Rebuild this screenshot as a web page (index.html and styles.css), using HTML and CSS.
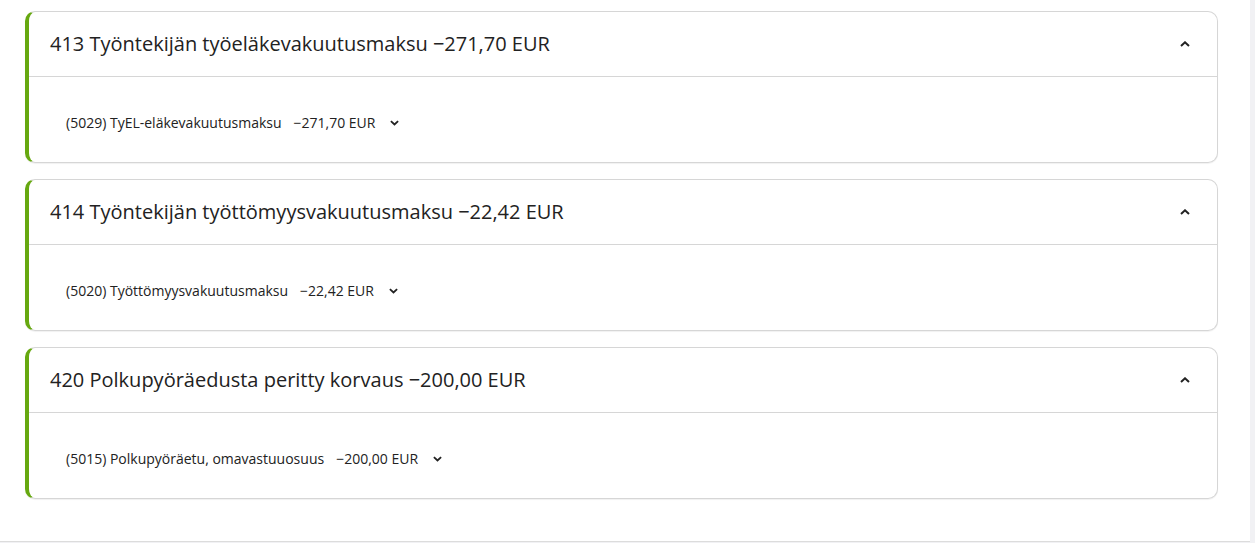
FILE: index.html
```html
<!DOCTYPE html>
<html lang="fi">
<head>
<meta charset="utf-8">
<link rel="stylesheet" href="styles.css">
</head>
<body>
<div class="page">
  <div class="list">
    <section class="card">
      <div class="card-head">
        <h2 class="card-title">413 Työntekijän työeläkevakuutusmaksu −271,70 EUR</h2>
        <svg class="chev" viewBox="0 0 10 6" width="10" height="6"><path d="M1 5 L5 1.3 L9 5" fill="none" stroke="#222" stroke-width="2"/></svg>
      </div>
      <div class="card-body">
        <span class="row-label">(5029) TyEL-eläkevakuutusmaksu</span>
        <span class="row-amount">−271,70 EUR</span>
        <svg class="chev small" viewBox="0 0 10 6" width="9" height="6"><path d="M1 1 L5 4.7 L9 1" fill="none" stroke="#222" stroke-width="2"/></svg>
      </div>
    </section>
    <section class="card">
      <div class="card-head">
        <h2 class="card-title">414 Työntekijän työttömyysvakuutusmaksu −22,42 EUR</h2>
        <svg class="chev" viewBox="0 0 10 6" width="10" height="6"><path d="M1 5 L5 1.3 L9 5" fill="none" stroke="#222" stroke-width="2"/></svg>
      </div>
      <div class="card-body">
        <span class="row-label">(5020) Työttömyysvakuutusmaksu</span>
        <span class="row-amount">−22,42 EUR</span>
        <svg class="chev small" viewBox="0 0 10 6" width="9" height="6"><path d="M1 1 L5 4.7 L9 1" fill="none" stroke="#222" stroke-width="2"/></svg>
      </div>
    </section>
    <section class="card">
      <div class="card-head">
        <h2 class="card-title">420 Polkupyöräedusta peritty korvaus −200,00 EUR</h2>
        <svg class="chev" viewBox="0 0 10 6" width="10" height="6"><path d="M1 5 L5 1.3 L9 5" fill="none" stroke="#222" stroke-width="2"/></svg>
      </div>
      <div class="card-body">
        <span class="row-label">(5015) Polkupyöräetu, omavastuuosuus</span>
        <span class="row-amount">−200,00 EUR</span>
        <svg class="chev small" viewBox="0 0 10 6" width="9" height="6"><path d="M1 1 L5 4.7 L9 1" fill="none" stroke="#222" stroke-width="2"/></svg>
      </div>
    </section>
  </div>
</div>
</body>
</html>
```

FILE: styles.css
```css
html, body {
  margin: 0;
  padding: 0;
  background: #f1f1f4;
  font-family: "Open Sans", "Noto Sans", sans-serif;
  color: #222;
}
.page {
  width: 1250px;
  height: 542px;
  background: #fff;
  border-bottom: 1px solid #dcdcdc;
  box-sizing: border-box;
  padding: 11px 0 0 25px;
}
.list {
  width: 1193px;
  display: flex;
  flex-direction: column;
  gap: 16px;
}
.card {
  border: 1px solid #d6d6d6;
  border-left: 4px solid #66a810;
  border-radius: 10px;
  background: #fff;
  box-shadow: 0 1px 1px rgba(0,0,0,0.06);
}
.card-head {
  height: 65px;
  display: flex;
  align-items: center;
  justify-content: space-between;
  padding: 0 27px 1px 21px;
  box-sizing: border-box;
  border-bottom: 1px solid #d6d6d6;
}
.card-title {
  margin: 0;
  font-size: 20px;
  font-weight: 400;
  color: #222;
}
.card-body {
  height: 85px;
  display: flex;
  align-items: center;
  padding: 6px 0 0 37px;
  box-sizing: border-box;
  font-size: 14px;
  color: #222;
}
.row-amount {
  margin-left: 12px;
}
.chev.small {
  margin-left: 15px;
}
```
